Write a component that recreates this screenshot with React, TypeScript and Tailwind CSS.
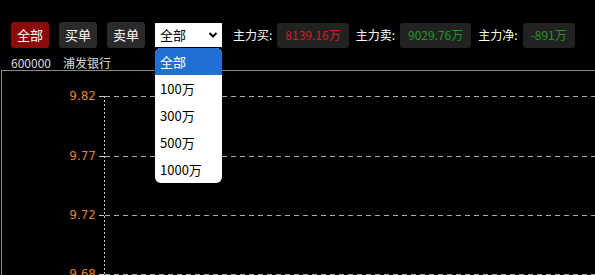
import React from "react";

const FONT = { fontFamily: '"Noto Sans CJK SC", "Noto Sans", sans-serif' };

const OPTIONS = ["全部", "100万", "300万", "500万", "1000万"];

// y-axis price levels and their pixel rows inside the chart svg (chart top = 70)
const LEVELS = [
  { label: "9.82", y: 25 },
  { label: "9.77", y: 85 },
  { label: "9.72", y: 144 },
  { label: "9.68", y: 203 },
];

function Stat({ label, value, color }: { label: string; value: string; color: string }) {
  return (
    <div className="flex items-center">
      <span className="text-[12px] text-white">{label}</span>
      <span
        className={`ml-[5px] h-[25px] px-[8px] flex items-center rounded-[3px] bg-[#222222] text-[12px] ${color}`}
      >
        {value}
      </span>
    </div>
  );
}

function Chart() {
  return (
    <svg width="594" height="205" className="block">
      {LEVELS.map((l) => (
        <g key={l.label}>
          <text
            x="94"
            y={l.y + 4}
            textAnchor="end"
            fontSize="12"
            fill="#e0802c"
            fontFamily='"DejaVu Sans", sans-serif'
          >
            {l.label}
          </text>
          <line x1="97" x2="102" y1={l.y + 0.5} y2={l.y + 0.5} stroke="#cccccc" />
          <line
            x1="103"
            x2="594"
            y1={l.y + 0.5}
            y2={l.y + 0.5}
            stroke="#aaaaaa"
            strokeDasharray="5 4"
          />
        </g>
      ))}
      <line x1="102.5" x2="102.5" y1={LEVELS[0].y} y2="205" stroke="#cccccc" strokeDasharray="2 2" />
    </svg>
  );
}

export default function App() {
  return (
    <div className="w-[595px] h-[275px] bg-black overflow-hidden relative" style={FONT}>
      {/* toolbar */}
      <div className="flex items-center h-[26px] mt-[22px] pl-[11px]">
        <button className="w-[38px] h-[26px] rounded-[3px] bg-[#8b0a0a] text-white text-[13px]">全部</button>
        <button className="ml-[10px] w-[38px] h-[26px] rounded-[3px] bg-[#2a2a2a] text-white text-[13px]">买单</button>
        <button className="ml-[10px] w-[38px] h-[26px] rounded-[3px] bg-[#2a2a2a] text-white text-[13px]">卖单</button>

        <div className="relative ml-[10px]">
          <div className="w-[67px] h-[24px] bg-white flex items-center justify-between pl-[5px] pr-[4px] text-[13px] text-black">
            <span>全部</span>
            <svg width="10" height="8" viewBox="0 0 10 8">
              <path d="M1.5 2 L5 5.5 L8.5 2" fill="none" stroke="#000" strokeWidth="2" />
            </svg>
          </div>
          {/* open option list */}
          <div className="absolute left-0 top-[25px] w-[67px] bg-white rounded-[6px] overflow-hidden shadow z-10">
            {OPTIONS.map((o, i) => (
              <div
                key={o}
                className={`h-[27px] flex items-center pl-[5px] text-[13px] ${
                  i === 0 ? "bg-[#1f6fd6] text-white" : "text-black"
                }`}
              >
                {o}
              </div>
            ))}
          </div>
        </div>

        <div className="ml-[11px] flex items-center gap-[7px]">
          <Stat label="主力买:" value="8139.16万" color="text-[#d42020]" />
          <Stat label="主力卖:" value="9029.76万" color="text-[#1f9a1f]" />
          <Stat label="主力净:" value="-891万" color="text-[#1f9a1f]" />
        </div>
      </div>

      {/* stock title */}
      <div className="pl-[11px] mt-[7px] h-[15px] flex items-center text-[12px] text-[#dddddd]">
        <span>600000</span>
        <span className="ml-[12px]">浦发银行</span>
      </div>

      {/* chart panel */}
      <div className="ml-[1px] border-t border-l border-[#888888]">
        <Chart />
      </div>
    </div>
  );
}
